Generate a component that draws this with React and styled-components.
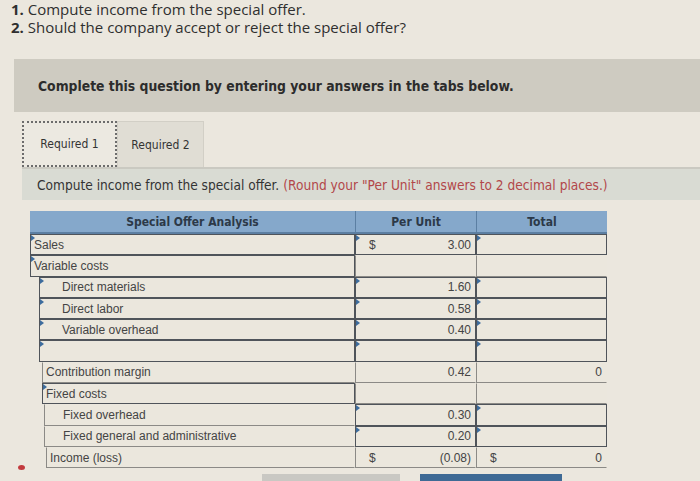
import React from 'react';
import styled, { createGlobalStyle } from 'styled-components';

const GlobalStyle = createGlobalStyle`
  html, body {
    margin: 0;
    padding: 0;
    background: #ebe7de;
  }
  body {
    width: 700px;
    height: 481px;
    overflow: hidden;
  }
`;

const Page = styled.div`
  position: relative;
  width: 700px;
  height: 481px;
  background: #ebe7de;
  display: flex;
  flex-direction: column;
`;

const Questions = styled.ol`
  margin: 0;
  padding: 0 0 0 11px;
  list-style: none;
  font-family: "Open Sans", "Liberation Sans", sans-serif;
  font-size: 15px;
  line-height: 18px;
  color: #2f2f2f;

  b {
    font-weight: 700;
  }
`;

const Banner = styled.div`
  margin: 23px 0 0 14px;
  height: 53px;
  background: #cecbc1;
  display: flex;
  align-items: center;
  padding-left: 24px;
  font-family: "DejaVu Sans Condensed", "DejaVu Sans", sans-serif;
  font-weight: 700;
  font-size: 13.8px;
  color: #2c2c2c;
`;

const Tabs = styled.div`
  margin: 9px 0 0 22px;
  display: flex;
  height: 46px;
  border-bottom: 2px solid #cac9c1;
`;

const Tab = styled.div`
  width: ${p => p.$w}px;
  box-sizing: border-box;
  display: flex;
  align-items: center;
  justify-content: center;
  font-family: "DejaVu Sans Condensed", "DejaVu Sans", sans-serif;
  font-size: 12px;
  color: #333;
  background: ${p => (p.$active ? '#ece9e1' : '#e0ddd4')};
  border: ${p => (p.$active ? '2px dotted #6c6c6c' : '1px solid #d2cfc6')};
  border-bottom: ${p => (p.$active ? '2px dotted #6c6c6c' : 'none')};
`;

const Instruction = styled.div`
  margin-left: 22px;
  height: 31px;
  background: #d9dbd3;
  display: flex;
  align-items: center;
  padding-left: 15px;
  font-family: "DejaVu Sans Condensed", "DejaVu Sans", sans-serif;
  font-size: 13.6px;
  color: #333;

  span {
    color: #b2474a;
    margin-left: 4px;
  }
`;

const Table = styled.div`
  margin: 11px 0 0 30px;
  width: 577px;
  display: grid;
  grid-template-columns: 325px 121px 131px;
  font-family: "Liberation Sans", Arial, sans-serif;
  font-size: 12px;
  color: #444;
`;

const Head = styled.div`
  height: 21px;
  background: #85a8cb;
  display: flex;
  align-items: center;
  justify-content: center;
  font-family: "DejaVu Sans Condensed", "DejaVu Sans", sans-serif;
  font-weight: 700;
  font-size: 12px;
  color: #2c3948;
  border-left: ${p => (p.$first ? 'none' : '1px solid #5b7fa3')};
  border-bottom: 2px solid #5c7fa2;
`;

const Cell = styled.div`
  position: relative;
  height: 21.3px;
  box-sizing: border-box;
  display: flex;
  align-items: center;
  justify-content: ${p => (p.$right ? 'flex-end' : 'space-between')};
  padding: ${p => (p.$indent ? `0 4px 0 ${p.$indent}px` : '0 4px 0 3px')};
  background: #ebe7dd;
  border-left: 1px solid ${p => (p.$box ? '#4f545a' : '#8b8a86')};
  border-right: 1px solid ${p => (p.$box ? '#4f545a' : 'transparent')};
  border-bottom: 1px solid ${p => (p.$box ? '#4f545a' : '#8b8a86')};
  border-top: 1px solid ${p => (p.$box ? '#4f545a' : 'transparent')};
  margin-left: ${p => p.$shift || 0}px;

  &::before {
    content: '';
    display: ${p => (p.$flag ? 'block' : 'none')};
    position: absolute;
    left: 0;
    top: 0;
    border-left: 4px solid #3d6c9d;
    border-top: 3px solid transparent;
    border-bottom: 3px solid transparent;
  }
`;

const Dollar = styled.span`
  margin-left: 10px;
`;

const Dot = styled.div`
  position: absolute;
  left: 18px;
  top: 465px;
  width: 7px;
  height: 5px;
  border-radius: 50%;
  background: #c23a3e;
`;

const Footer = styled.div`
  position: absolute;
  top: 474px;
  left: 262px;
  display: flex;
  gap: 20px;
`;

const Bar = styled.div`
  width: ${p => p.$w}px;
  height: 7px;
  background: ${p => p.$c};
`;

const rows = [
  { label: 'Sales', unit: '3.00', dollar: true, total: '', unitBox: true, totalBox: true, labelBox: true },
  { label: 'Variable costs', labelBox: true },
  { label: 'Direct materials', indent: 22, shift: 9, unit: '1.60', unitBox: true, totalBox: true, labelBox: true },
  { label: 'Direct labor', indent: 22, shift: 9, unit: '0.58', unitBox: true, totalBox: true, labelBox: true },
  { label: 'Variable overhead', indent: 22, shift: 9, unit: '0.40', unitBox: true, totalBox: true, labelBox: true },
  { label: '', indent: 22, shift: 9, unit: '', unitBox: true, totalBox: true, labelBox: true },
  { label: 'Contribution margin', shift: 12, unit: '0.42', total: '0' },
  { label: 'Fixed costs', shift: 12, labelBox: true },
  { label: 'Fixed overhead', indent: 18, shift: 14, unit: '0.30', unitBox: true, totalBox: true },
  { label: 'Fixed general and administrative', indent: 18, shift: 14, unit: '0.20', unitBox: true, totalBox: true },
  { label: 'Income (loss)', shift: 16, unit: '(0.08)', dollar: true, total: '0', totalDollar: true },
];

export default function App() {
  return (
    <Page>
      <GlobalStyle />
      <Questions>
        <li><b>1.</b> Compute income from the special offer.</li>
        <li><b>2.</b> Should the company accept or reject the special offer?</li>
      </Questions>
      <Banner>Complete this question by entering your answers in the tabs below.</Banner>
      <Tabs>
        <Tab $w={95} $active>Required 1</Tab>
        <Tab $w={87}>Required 2</Tab>
      </Tabs>
      <Instruction>
        Compute income from the special offer.
        <span>(Round your "Per Unit" answers to 2 decimal places.)</span>
      </Instruction>
      <Table>
        <Head $first>Special Offer Analysis</Head>
        <Head>Per Unit</Head>
        <Head>Total</Head>
        {rows.map((r, i) => (
          <React.Fragment key={i}>
            <Cell $box={r.labelBox} $flag={r.labelBox} $indent={r.indent} $shift={r.shift}>
              {r.label}
            </Cell>
            <Cell $box={r.unitBox} $flag={r.unitBox} $right={!r.dollar}>
              {r.dollar && <Dollar>$</Dollar>}
              {r.unit}
            </Cell>
            <Cell $box={r.totalBox} $flag={r.totalBox} $right={!r.totalDollar}>
              {r.totalDollar && <Dollar>$</Dollar>}
              {r.total}
            </Cell>
          </React.Fragment>
        ))}
      </Table>
      <Dot />
      <Footer>
        <Bar $w={138} $c="#c9c8c3" />
        <Bar $w={142} $c="#3f6a95" />
      </Footer>
    </Page>
  );
}
